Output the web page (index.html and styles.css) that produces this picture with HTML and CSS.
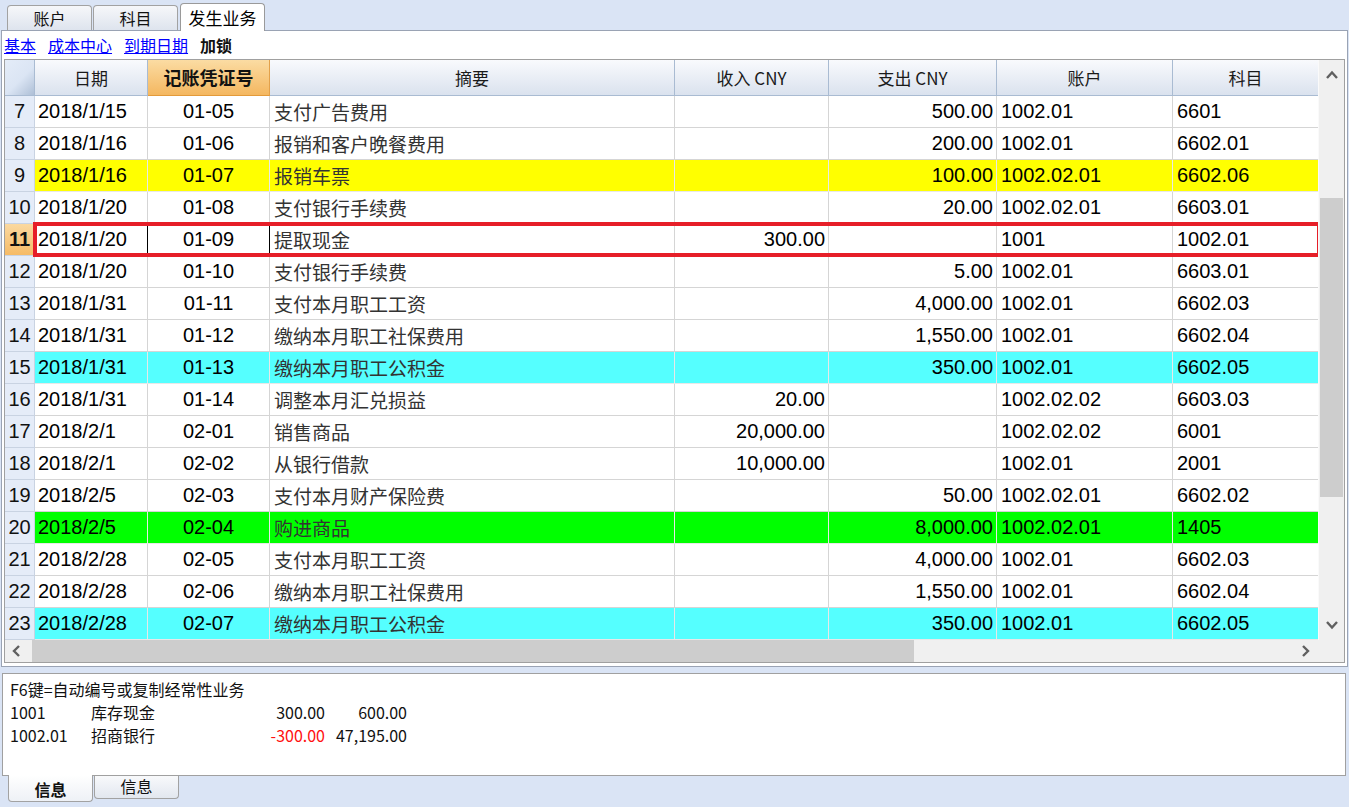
FILE: index.html
```html
<!DOCTYPE html>
<html lang="zh">
<head>
<meta charset="utf-8">
<title>发生业务</title>
<link rel="stylesheet" href="styles.css">
</head>
<body>
<div class="tabs">
  <div class="tab">账户</div>
  <div class="tab">科目</div>
  <div class="tab sel">发生业务</div>
</div>
<div class="panel">
  <div class="links">
    <a class="lnk">基本</a>
    <a class="lnk">成本中心</a>
    <a class="lnk">到期日期</a>
    <span class="lock">加锁</span>
  </div>
  <div class="grid">
    <div class="main">
      <div class="row head">
        <div class="c corner"></div>
        <div class="c">日期</div>
        <div class="c hsel">记账凭证号</div>
        <div class="c">摘要</div>
        <div class="c">收入 CNY</div>
        <div class="c">支出 CNY</div>
        <div class="c">账户</div>
        <div class="c">科目</div>
      </div>
      <div class="body">
        <div class="row"><div class="c n">7</div><div class="c d">2018/1/15</div><div class="c v">01-05</div><div class="c s">支付广告费用</div><div class="c a"></div><div class="c a">500.00</div><div class="c t">1002.01</div><div class="c t">6601</div></div>
        <div class="row"><div class="c n">8</div><div class="c d">2018/1/16</div><div class="c v">01-06</div><div class="c s">报销和客户晚餐费用</div><div class="c a"></div><div class="c a">200.00</div><div class="c t">1002.01</div><div class="c t">6602.01</div></div>
        <div class="row yellow"><div class="c n">9</div><div class="c d">2018/1/16</div><div class="c v">01-07</div><div class="c s">报销车票</div><div class="c a"></div><div class="c a">100.00</div><div class="c t">1002.02.01</div><div class="c t">6602.06</div></div>
        <div class="row"><div class="c n">10</div><div class="c d">2018/1/20</div><div class="c v">01-08</div><div class="c s">支付银行手续费</div><div class="c a"></div><div class="c a">20.00</div><div class="c t">1002.02.01</div><div class="c t">6603.01</div></div>
        <div class="row cur"><div class="c n">11</div><div class="c d">2018/1/20</div><div class="c v">01-09</div><div class="c s">提取现金</div><div class="c a">300.00</div><div class="c a"></div><div class="c t">1001</div><div class="c t">1002.01</div></div>
        <div class="row"><div class="c n">12</div><div class="c d">2018/1/20</div><div class="c v">01-10</div><div class="c s">支付银行手续费</div><div class="c a"></div><div class="c a">5.00</div><div class="c t">1002.01</div><div class="c t">6603.01</div></div>
        <div class="row"><div class="c n">13</div><div class="c d">2018/1/31</div><div class="c v">01-11</div><div class="c s">支付本月职工工资</div><div class="c a"></div><div class="c a">4,000.00</div><div class="c t">1002.01</div><div class="c t">6602.03</div></div>
        <div class="row"><div class="c n">14</div><div class="c d">2018/1/31</div><div class="c v">01-12</div><div class="c s">缴纳本月职工社保费用</div><div class="c a"></div><div class="c a">1,550.00</div><div class="c t">1002.01</div><div class="c t">6602.04</div></div>
        <div class="row cyan"><div class="c n">15</div><div class="c d">2018/1/31</div><div class="c v">01-13</div><div class="c s">缴纳本月职工公积金</div><div class="c a"></div><div class="c a">350.00</div><div class="c t">1002.01</div><div class="c t">6602.05</div></div>
        <div class="row"><div class="c n">16</div><div class="c d">2018/1/31</div><div class="c v">01-14</div><div class="c s">调整本月汇兑损益</div><div class="c a">20.00</div><div class="c a"></div><div class="c t">1002.02.02</div><div class="c t">6603.03</div></div>
        <div class="row"><div class="c n">17</div><div class="c d">2018/2/1</div><div class="c v">02-01</div><div class="c s">销售商品</div><div class="c a">20,000.00</div><div class="c a"></div><div class="c t">1002.02.02</div><div class="c t">6001</div></div>
        <div class="row"><div class="c n">18</div><div class="c d">2018/2/1</div><div class="c v">02-02</div><div class="c s">从银行借款</div><div class="c a">10,000.00</div><div class="c a"></div><div class="c t">1002.01</div><div class="c t">2001</div></div>
        <div class="row"><div class="c n">19</div><div class="c d">2018/2/5</div><div class="c v">02-03</div><div class="c s">支付本月财产保险费</div><div class="c a"></div><div class="c a">50.00</div><div class="c t">1002.02.01</div><div class="c t">6602.02</div></div>
        <div class="row green"><div class="c n">20</div><div class="c d">2018/2/5</div><div class="c v">02-04</div><div class="c s">购进商品</div><div class="c a"></div><div class="c a">8,000.00</div><div class="c t">1002.02.01</div><div class="c t">1405</div></div>
        <div class="row"><div class="c n">21</div><div class="c d">2018/2/28</div><div class="c v">02-05</div><div class="c s">支付本月职工工资</div><div class="c a"></div><div class="c a">4,000.00</div><div class="c t">1002.01</div><div class="c t">6602.03</div></div>
        <div class="row"><div class="c n">22</div><div class="c d">2018/2/28</div><div class="c v">02-06</div><div class="c s">缴纳本月职工社保费用</div><div class="c a"></div><div class="c a">1,550.00</div><div class="c t">1002.01</div><div class="c t">6602.04</div></div>
        <div class="row cyan"><div class="c n">23</div><div class="c d">2018/2/28</div><div class="c v">02-07</div><div class="c s">缴纳本月职工公积金</div><div class="c a"></div><div class="c a">350.00</div><div class="c t">1002.01</div><div class="c t">6602.05</div></div>
        <div class="redbox"></div>
      </div>
    </div>
    <div class="vscroll">
      <svg class="arr" width="26" height="30" viewBox="0 0 26 30"><polyline points="8,18 13,12.5 18,18" fill="none" stroke="#606060" stroke-width="2.4"/></svg>
      <div class="vtrack"><div class="vthumb"></div></div>
      <svg class="arr" width="26" height="30" viewBox="0 0 26 30"><polyline points="8,12 13,17.5 18,12" fill="none" stroke="#606060" stroke-width="2.4"/></svg>
    </div>
    <div class="hscroll">
      <svg class="harr" width="27" height="22" viewBox="0 0 27 22"><polyline points="14,6 9,11 14,16" fill="none" stroke="#606060" stroke-width="2.4"/></svg>
      <div class="htrack"><div class="hthumb"></div></div>
      <svg class="harr" width="27" height="22" viewBox="0 0 27 22"><polyline points="12,6 17,11 12,16" fill="none" stroke="#606060" stroke-width="2.4"/></svg>
    </div>
    <div class="sbcorner"></div>
  </div>
</div>
<div class="info">
  <div class="iline">F6键=自动编号或复制经常性业务</div>
  <div class="iline acc"><span class="code">1001</span><span class="nm">库存现金</span><span class="m1">300.00</span><span class="m2">600.00</span></div>
  <div class="iline acc"><span class="code">1002.01</span><span class="nm">招商银行</span><span class="m1 neg">-300.00</span><span class="m2">47,195.00</span></div>
</div>
<div class="btabs">
  <div class="btab sel">信息</div>
  <div class="btab">信息</div>
</div>
</body>
</html>
```

FILE: styles.css
```css
* { box-sizing: border-box; }
html, body { margin: 0; padding: 0; }
body {
  width: 1349px;
  height: 807px;
  overflow: hidden;
  background: #dae4f5;
  font-family: "Noto Sans CJK SC", "Liberation Sans", sans-serif;
  color: #000;
}

/* top tabs */
.tabs {
  height: 30px;
  display: flex;
  align-items: flex-end;
  padding-left: 7px;
  gap: 1px;
}
.tab {
  width: 85px;
  height: 25px;
  border: 1px solid #a2a2a2;
  border-bottom: none;
  border-radius: 4px 4px 0 0;
  background: linear-gradient(#f6f7fa, #dee4ee);
  font-size: 16px;
  line-height: 24px;
  text-align: center;
  color: #111;
}
.tab.sel {
  height: 28px;
  margin-left: 1px;
  background: #fff;
  position: relative;
  top: 1px;
  border-color: #9a9a9a;
  font-size: 17px;
  line-height: 27px;
  color: #000;
}

/* main panel */
.panel {
  margin: 0 1px 0 1px;
  height: 637px;
  background: #fff;
  border: 1px solid #9aa3b4;
  padding: 0 2px;
}
.links {
  height: 28px;
  display: flex;
  align-items: center;
  padding-left: 0;
  gap: 12px;
  font-size: 16px;
}
.lnk { color: #0000ff; text-decoration: underline; }
.lock { font-weight: bold; color: #111; }

.grid {
  border: 1px solid #a0a0a0;
  display: grid;
  grid-template-columns: 1313px 26px;
  grid-template-rows: 580px 22px;
  width: 1341px;
}
.main { overflow: hidden; }
.row {
  display: grid;
  grid-template-columns: 30px 113px 122px 405px 154px 168px 176px 145px;
  height: 32px;
}
.c {
  border-right: 1px solid #d5d5d5;
  border-bottom: 1px solid #d5d5d5;
  white-space: nowrap;
  overflow: hidden;
  font-family: "Liberation Sans", Arial, sans-serif;
  font-size: 20px;
  line-height: 31px;
}
.row:not(.head) .c:last-child { border-right: none; }

.head { height: 36px; }
.head .c {
  font-family: "Noto Sans CJK SC", sans-serif;
  font-size: 17px;
  line-height: 35px;
  text-align: center;
  color: #1a1a1a;
  background: linear-gradient(#f9fafd, #dae2ee);
  border-right: 1px solid #a9bbd2;
  border-bottom: 1px solid #a9bbd2;
}
.head .c:last-child { border-right: none; }
.head .corner {
  background: linear-gradient(135deg, #e4ecf8 0%, #dbe5f4 55%, #aebfd6 100%);
}
.head .hsel {
  background: linear-gradient(#fbdca3, #f4b760);
  font-weight: bold;
  font-size: 18px;
  border-right-color: #e3a14a;
  border-bottom-color: #e39a3a;
  color: #111;
}

.body { position: relative; }
.c.n {
  background: #e5ecf8;
  text-align: center;
  border-right-color: #c9d3e2;
  border-bottom-color: #c9d3e2;
  color: #111;
}
.c.d { padding-left: 3px; }
.c.v { text-align: center; }
.c.s {
  padding-left: 4px;
  font-family: "Noto Sans CJK SC", sans-serif;
  font-size: 19px;
  line-height: 31px;
  color: #333;
}
.c.a { text-align: right; padding-right: 3px; }
.c.t { padding-left: 4px; }

.yellow .c:not(.n) { background: #ffff00; }
.cyan .c:not(.n) { background: #55ffff; }
.green .c:not(.n) { background: #00ff00; }
.yellow .c, .cyan .c, .green .c { border-bottom-color: #e8e8e8; border-right-color: #e8e8e8; }
.yellow .c.n, .cyan .c.n, .green .c.n { border-right-color: #c9d3e2; border-bottom-color: #c9d3e2; }

.cur .c.n {
  background: linear-gradient(#fbd9a0, #f6bb66);
  font-weight: bold;
}
.cur .c.d { border-right-color: #000; }
.cur .c.v { border-right-color: #000; }

.redbox {
  position: absolute;
  left: 28px;
  top: 126px;
  width: 1288px;
  height: 35px;
  border: 4px solid #e61e28;
  pointer-events: none;
}

/* scrollbars */
.vscroll {
  background: #f0f0f0;
  display: flex;
  flex-direction: column;
  border-left: 1px solid #fafafa;
}
.arr { display: block; flex: none; }
.vtrack {
  flex: 1;
  padding-top: 108px;
}
.vthumb {
  margin: 0 1px 0 1px;
  height: 299px;
  background: #cdcdcd;
}
.hscroll {
  background: #f0f0f0;
  display: flex;
  align-items: stretch;
}
.harr { display: block; flex: none; }
.htrack { flex: 1; }
.hthumb {
  width: 882px;
  height: 22px;
  background: #cdcdcd;
}
.sbcorner { background: #f0f0f0; }

/* info panel */
.info {
  margin: 6px 3px 0 2px;
  height: 103px;
  background: #fff;
  border: 1px solid #a0a0a0;
  padding: 4px 0 0 7px;
  font-size: 16px;
}
.iline {
  height: 23px;
  line-height: 23px;
  white-space: nowrap;
  color: #111;
}
.acc { display: flex; }
.code { width: 81px; }
.nm { width: 130px; }
.m1 { width: 104px; text-align: right; }
.m2 { width: 82px; text-align: right; }
.neg { color: #ff1010; }

/* bottom tabs */
.btabs {
  display: flex;
  padding-left: 8px;
  gap: 1px;
}
.btab {
  width: 85px;
  height: 23px;
  border: 1px solid #a2a2a2;
  border-top: none;
  border-radius: 0 0 4px 4px;
  background: linear-gradient(#f8f9fb, #e2e7ef);
  font-size: 16px;
  line-height: 21px;
  text-align: center;
  color: #111;
}
.btab.sel {
  height: 27px;
  margin-top: -1px;
  background: linear-gradient(#ffffff, #eef1f6);
  font-weight: bold;
  line-height: 29px;
}
```
